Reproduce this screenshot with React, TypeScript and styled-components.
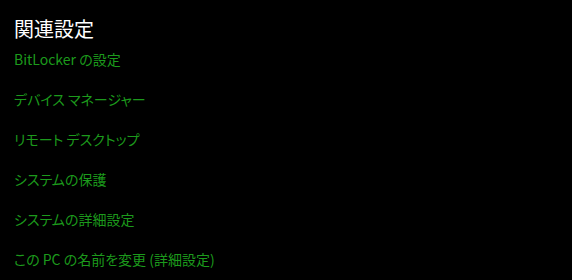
import React from 'react';
import styled, { createGlobalStyle } from 'styled-components';

const GlobalStyle = createGlobalStyle`
  html, body {
    margin: 0;
    padding: 0;
    background: #000;
  }
  body {
    font-family: "Noto Sans CJK JP", "Noto Sans", sans-serif;
  }
`;

const Panel = styled.div`
  width: 572px;
  height: 280px;
  background: #000;
  padding: 14px 14px 0 14px;
  box-sizing: border-box;
  display: flex;
  flex-direction: column;
`;

const Title = styled.h2`
  margin: 0 0 5px 0;
  font-size: 20px;
  font-weight: 400;
  line-height: 30px;
  color: #fff;
  font-feature-settings: "palt";
`;

const LinkList = styled.div`
  display: flex;
  flex-direction: column;
  gap: 20px;
`;

const Link = styled.a`
  font-size: 14px;
  line-height: 20px;
  color: #1c9a1c;
  text-decoration: none;
  cursor: pointer;
  font-feature-settings: "palt";
`;

const links = [
  'BitLocker の設定',
  'デバイス マネージャー',
  'リモート デスクトップ',
  'システムの保護',
  'システムの詳細設定',
  'この PC の名前を変更 (詳細設定)',
];

const App = () => {
  return (
    <>
      <GlobalStyle />
      <Panel>
        <Title>関連設定</Title>
        <LinkList>
          {links.map((text) => (
            <Link key={text}>{text}</Link>
          ))}
        </LinkList>
      </Panel>
    </>
  );
};

export default App;
